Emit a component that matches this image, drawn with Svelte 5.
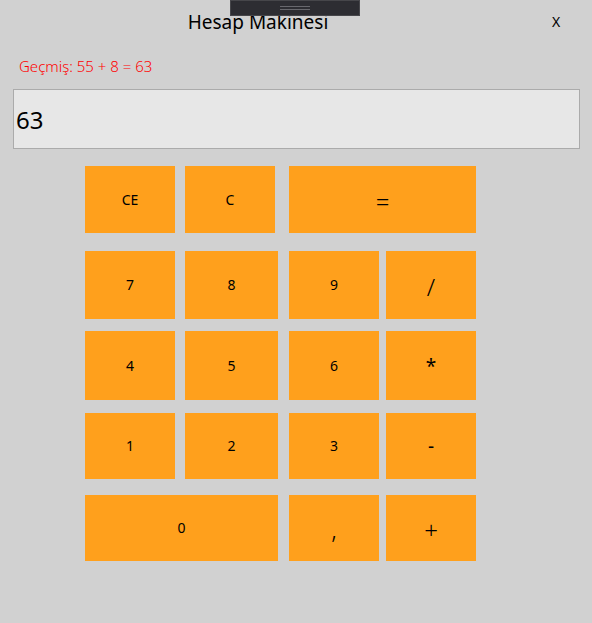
<script>
  const keys = [
    { label: 'CE', area: 'ce' },
    { label: 'C', area: 'c' },
    { label: '=', area: 'equals', large: true },
    { label: '7', area: 'seven' },
    { label: '8', area: 'eight' },
    { label: '9', area: 'nine' },
    { label: '/', area: 'divide', large: true },
    { label: '4', area: 'four' },
    { label: '5', area: 'five' },
    { label: '6', area: 'six' },
    { label: '*', area: 'times', medium: true },
    { label: '1', area: 'one' },
    { label: '2', area: 'two' },
    { label: '3', area: 'three' },
    { label: '-', area: 'minus', medium: true },
    { label: '0', area: 'zero' },
    { label: ',', area: 'comma', large: true },
    { label: '+', area: 'plus', large: true }
  ];

  let display = $state('63');
  let history = $state('55 + 8 = 63');
  let stored = $state(null);
  let operator = $state('');
  let fresh = $state(true);

  const parse = (text) => Number(text.replace(',', '.'));
  const format = (number) => String(number).replace('.', ',');

  function compute(a, b) {
    if (operator === '+') return a + b;
    if (operator === '-') return a - b;
    if (operator === '*') return a * b;
    return a / b;
  }

  function press(key) {
    if (key >= '0' && key <= '9') {
      display = fresh || display === '0' ? key : display + key;
      fresh = false;
    } else if (key === ',') {
      if (fresh) display = '0,';
      else if (!display.includes(',')) display += ',';
      fresh = false;
    } else if (key === 'CE') {
      display = '0';
      fresh = true;
    } else if (key === 'C') {
      display = '0';
      history = '';
      stored = null;
      operator = '';
      fresh = true;
    } else if (key === '=') {
      if (stored === null) return;
      const result = format(compute(stored, parse(display)));
      history = `${format(stored)} ${operator} ${display} = ${result}`;
      display = result;
      stored = null;
      fresh = true;
    } else {
      stored = parse(display);
      operator = key;
      fresh = true;
    }
  }
</script>

<main>
  <div class="handle" aria-hidden="true"><span></span></div>
  <header>
    <h1>Hesap Makinesi</h1>
    <button class="close" type="button">X</button>
  </header>

  <label class="history" for="result">Geçmiş: {history}</label>
  <input id="result" class="result" type="text" bind:value={display} />

  <div class="keypad">
    {#each keys as key}
      <button
        type="button"
        class="key {key.area}"
        class:large={key.large}
        class:medium={key.medium}
        onclick={() => press(key.label)}>{key.label}</button>
    {/each}
  </div>
</main>

<style>
  :global(body) {
    margin: 0;
    background: #d1d1d1;
  }

  main {
    position: relative;
    box-sizing: border-box;
    min-height: 100vh;
    padding: 0 12px 24px 13px;
    background: #d1d1d1;
    color: #000;
    font-family: 'Segoe UI', 'Noto Sans', 'Open Sans', sans-serif;
    font-size: 15px;
    line-height: 20px;
  }

  button,
  input {
    margin: 0;
    border: 0;
    border-radius: 0;
    color: inherit;
    font: inherit;
  }

  .handle {
    position: absolute;
    top: 0;
    left: 50%;
    z-index: 1;
    box-sizing: border-box;
    display: flex;
    align-items: center;
    justify-content: center;
    width: 130px;
    height: 16px;
    margin-left: -66px;
    border: 1px solid #46464a;
    background: #2d2d32;
  }

  .handle span {
    box-sizing: border-box;
    width: 30px;
    height: 4px;
    border: solid #68686d;
    border-width: 1px 0;
  }

  header {
    display: grid;
    grid-template-columns: 1fr 48px;
    align-items: center;
    height: 44px;
  }

  h1 {
    margin: 0;
    padding-right: 29px;
    font-size: 19px;
    font-weight: 400;
    line-height: 26px;
    text-align: center;
  }

  .close {
    height: 32px;
    padding: 0;
    background: transparent;
    font-size: 14px;
  }

  .history {
    display: block;
    padding: 12px 6px 13px;
    color: #ff0000;
    font-weight: 300;
  }

  .result {
    display: block;
    box-sizing: border-box;
    width: 100%;
    height: 60px;
    padding: 0 2px;
    border: 1px solid #ababab;
    background: #e7e7e7;
    font-size: 24px;
  }

  .keypad {
    display: grid;
    grid-template-columns: 90fr 10px 93fr 11px 90fr 7px 90fr;
    grid-template-rows: 67px 18px 68px 12px 69px 13px 66px 16px 66px;
    padding: 17px 104px 0 72px;
  }

  .key {
    padding: 0;
    background: #ffa01c;
    font-size: 14px;
  }

  .medium {
    font-size: 19px;
  }

  .large {
    padding-top: 4px;
    font-size: 24px;
    font-weight: 300;
  }

  .ce { grid-area: 1 / 1; }
  .c { grid-area: 1 / 3; margin-right: 3px; }
  .equals { grid-area: 1 / 5 / 2 / 8; }
  .seven { grid-area: 3 / 1; }
  .eight { grid-area: 3 / 3; }
  .nine { grid-area: 3 / 5; }
  .divide { grid-area: 3 / 7; }
  .four { grid-area: 5 / 1; }
  .five { grid-area: 5 / 3; }
  .six { grid-area: 5 / 5; }
  .times { grid-area: 5 / 7; }
  .one { grid-area: 7 / 1; }
  .two { grid-area: 7 / 3; }
  .three { grid-area: 7 / 5; }
  .minus { grid-area: 7 / 7; }
  .zero { grid-area: 9 / 1 / 10 / 4; }
  .comma { grid-area: 9 / 5; }
  .plus { grid-area: 9 / 7; }
</style>
